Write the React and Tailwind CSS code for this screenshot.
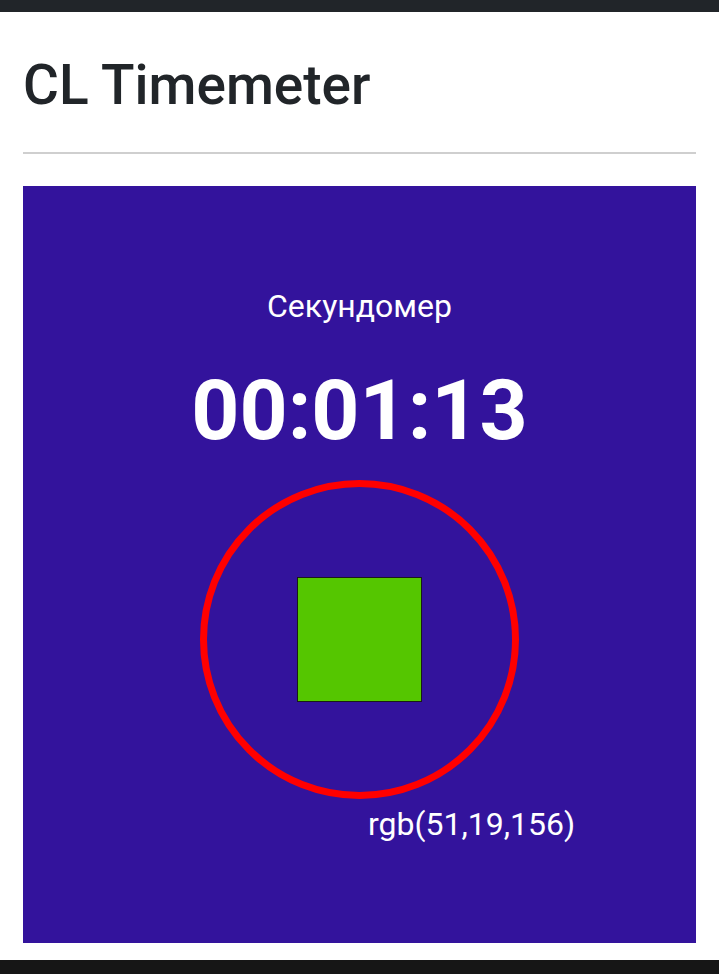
export default function App() {
  return (
    <div className="min-h-[974px] bg-white flex flex-col" style={{ fontFamily: 'Roboto, "Noto Sans", sans-serif' }}>
      <div className="h-[12px] bg-[#212529]" />
      <div className="flex-1 px-[23px]">
        <h1 className="mt-[40px] text-[55px] leading-[1.2] font-medium text-[#212529]">CL Timemeter</h1>
        <div className="mt-[34px] h-[2px] bg-[#cfcfcf]" />
        <div className="mt-[32px] h-[757px] bg-[#33139c] flex flex-col items-center text-white">
          <div className="mt-[96px] text-[32px] leading-[1.5]">Секундомер</div>
          <div className="mt-[31px] text-[84px] leading-[1.2] font-bold">00:01:13</div>
          <div className="mt-[18px] w-[319px] h-[319px] rounded-full border-[7px] border-[#ff0000] flex items-center justify-center">
            <div className="w-[125px] h-[125px] bg-[#55c600] border border-[#1a1a1a]" />
          </div>
          <div className="self-start pl-[345px] mt-[1px] text-[32px] leading-[1.5]">rgb(51,19,156)</div>
        </div>
      </div>
      <div className="h-[14px] bg-[#161616]" />
    </div>
  );
}
